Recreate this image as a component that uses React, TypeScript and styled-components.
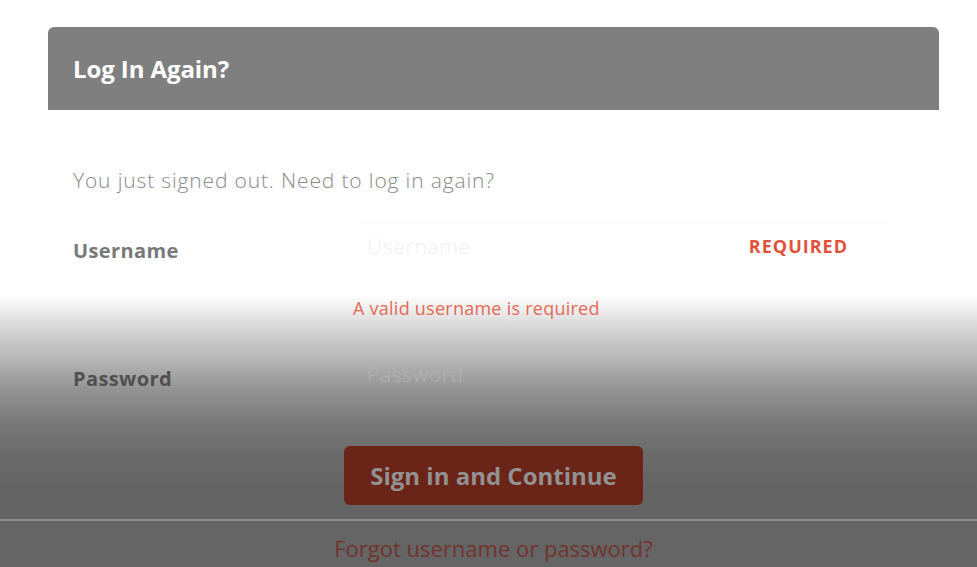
import React from "react";
import styled, { createGlobalStyle } from "styled-components";

const GlobalStyle = createGlobalStyle`
  html, body {
    margin: 0;
    height: 100%;
  }
  body {
    font-family: "Open Sans", Lato, "Liberation Sans", sans-serif;
    background: linear-gradient(
      to bottom,
      #ffffff 0px,
      #ffffff 295px,
      #dcdcdc 323px,
      #b8b8b8 357px,
      #939393 390px,
      #787878 423px,
      #6a6a6a 457px,
      #646464 490px,
      #656565 567px
    );
    overflow: hidden;
  }
  #root {
    min-height: 100%;
  }
`;

const Page = styled.div`
  display: flex;
  flex-direction: column;
  padding-top: 27px;
`;

const Card = styled.section`
  margin: 0 38px 0 48px;
  display: flex;
  flex-direction: column;
`;

const Header = styled.header`
  height: 83px;
  background: #7f7f80;
  border-radius: 6px 6px 0 0;
  display: flex;
  align-items: center;
  padding: 0 25px;
`;

const Title = styled.h1`
  margin: 0;
  color: #ffffff;
  font-size: 24px;
  font-weight: 700;
  letter-spacing: -0.1px;
`;

const Body = styled.div`
  padding: 58px 25px 0;
  display: flex;
  flex-direction: column;
`;

const Intro = styled.p`
  margin: 0;
  font-size: 21px;
  line-height: 24px;
  font-weight: 300;
  letter-spacing: 0.85px;
  color: #8a8a8a;
`;

const FormRow = styled.div<{ $top: number }>`
  display: grid;
  grid-template-columns: 285px 532px;
  align-items: center;
  margin-top: ${(p) => p.$top}px;
`;

const Label = styled.label<{ $color: string }>`
  font-size: 20px;
  font-weight: 700;
  letter-spacing: 0.4px;
  color: ${(p) => p.$color};
  padding-top: 7px;
`;

const InputWrap = styled.div`
  position: relative;
`;

const Input = styled.input<{ $placeholder: string; $line: string }>`
  box-sizing: border-box;
  width: 100%;
  height: 50px;
  border: none;
  border-top: 1px solid ${(p) => p.$line};
  background: transparent;
  padding: 0 9px 4px;
  font-family: inherit;
  font-size: 21px;
  font-weight: 300;
  letter-spacing: 0.7px;
  outline: none;
  &::placeholder {
    color: ${(p) => p.$placeholder};
  }
`;

const Required = styled.span`
  position: absolute;
  right: 42px;
  top: 50%;
  transform: translateY(-55%);
  font-size: 18px;
  font-weight: 700;
  letter-spacing: 1px;
  color: #e0523a;
`;

const ErrorText = styled.div`
  margin: 26px 0 0 280px;
  font-size: 18px;
  line-height: 20px;
  letter-spacing: 0.25px;
  color: #e56a55;
`;

const ButtonRow = styled.div`
  display: flex;
  justify-content: center;
  margin-top: 46px;
`;

const Button = styled.button`
  width: 299px;
  height: 59px;
  border: none;
  border-radius: 6px;
  background: #6b2418;
  color: #929292;
  font-family: inherit;
  font-size: 24px;
  font-weight: 700;
  cursor: pointer;
`;

const Divider = styled.hr`
  margin: 14px 0 0;
  border: none;
  height: 2px;
  background: #8d8d8d;
`;

const Footer = styled.div`
  margin: 15px 38px 0 48px;
  display: flex;
  justify-content: center;
`;

const ForgotLink = styled.a`
  font-size: 22px;
  line-height: 24px;
  color: #71342e;
  text-decoration: none;
`;

export default function App() {
  return (
    <>
      <GlobalStyle />
      <Page>
        <Card>
          <Header>
            <Title>Log In Again?</Title>
          </Header>
          <Body>
            <Intro>You just signed out. Need to log in again?</Intro>
            <FormRow $top={30}>
              <Label $color="#787878">Username</Label>
              <InputWrap>
                <Input $line="rgba(0,0,0,0.025)" $placeholder="#f0f0f0" placeholder="Username" />
                <Required>REQUIRED</Required>
              </InputWrap>
            </FormRow>
            <ErrorText>A valid username is required</ErrorText>
            <FormRow $top={32}>
              <Label $color="#505050">Password</Label>
              <InputWrap>
                <Input $line="transparent" $placeholder="#b2b2b2" type="password" placeholder="Password" />
              </InputWrap>
            </FormRow>
            <ButtonRow>
              <Button>Sign in and Continue</Button>
            </ButtonRow>
          </Body>
        </Card>
        <Divider />
        <Footer>
          <ForgotLink href="#">Forgot username or password?</ForgotLink>
        </Footer>
      </Page>
    </>
  );
}
